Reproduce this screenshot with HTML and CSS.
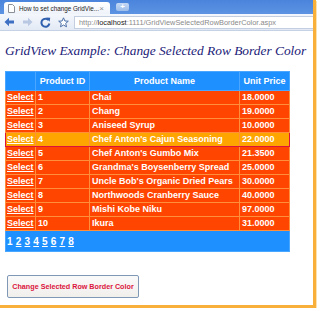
FILE: index.html
```html
<!DOCTYPE html>
<html lang="en">
<head>
  <meta charset="UTF-8">
  <title>GridView Selected Row Border Color</title>
  <link rel="stylesheet" href="styles.css">
</head>
<body>
  <div class="window">
    <div class="tabstrip">
      <div class="tab">
        <svg class="tab-icon" width="7" height="9" viewBox="0 0 7 9">
          <path d="M0.5 0.5 H4.5 L6.5 2.5 V8.5 H0.5 Z" fill="#fff" stroke="#8a8f98" stroke-width="1"/>
        </svg>
        <span class="tab-title">How to set change GridVie...</span>
        <span class="tab-close">×</span>
      </div>
      <div class="newtab">+</div>
    </div>

    <div class="toolbar">
      <svg class="tool" width="11" height="10" viewBox="0 0 11 10">
        <path d="M0.5 5 L5 0.8 V3.4 H10 V6.6 H5 V9.2 Z" fill="#3d6fc2"/>
      </svg>
      <svg class="tool" width="11" height="10" viewBox="0 0 11 10">
        <path d="M10.5 5 L6 0.8 V3.4 H1 V6.6 H6 V9.2 Z" fill="#b8c8e2"/>
      </svg>
      <svg class="tool" width="11" height="11" viewBox="0 0 11 11">
        <path d="M8.6 3.2 A4 4 0 1 0 9.4 6.5" fill="none" stroke="#2f5fae" stroke-width="2"/>
        <path d="M6.2 0.6 L10.2 0.8 L9.6 4.8 Z" fill="#2f5fae"/>
      </svg>
      <svg class="tool" width="11" height="11" viewBox="0 0 11 11">
        <path d="M5.5 0.8 L6.9 4 L10.3 4.2 L7.7 6.4 L8.5 9.8 L5.5 8 L2.5 9.8 L3.3 6.4 L0.7 4.2 L4.1 4 Z" fill="#fff" stroke="#4c6fa8" stroke-width="1"/>
      </svg>
      <div class="omnibox">
        <span class="url-dim">http://</span><span class="url-host">localhost</span><span class="url-dim">:1111/GridViewSelectedRowBorderColor.aspx</span>
      </div>
    </div>

    <div class="page">
      <h2 class="title">GridView Example: Change Selected Row Border Color</h2>

      <table class="grid">
        <thead>
          <tr>
            <th class="col-select"></th>
            <th class="col-id">Product ID</th>
            <th class="col-name">Product Name</th>
            <th class="col-price">Unit Price</th>
          </tr>
        </thead>
        <tbody>
          <tr><td><a href="#">Select</a></td><td>1</td><td>Chai</td><td>18.0000</td></tr>
          <tr><td><a href="#">Select</a></td><td>2</td><td>Chang</td><td>19.0000</td></tr>
          <tr><td><a href="#">Select</a></td><td>3</td><td>Aniseed Syrup</td><td>10.0000</td></tr>
          <tr class="selected"><td><a href="#">Select</a></td><td>4</td><td>Chef Anton's Cajun Seasoning</td><td>22.0000</td></tr>
          <tr><td><a href="#">Select</a></td><td>5</td><td>Chef Anton's Gumbo Mix</td><td>21.3500</td></tr>
          <tr><td><a href="#">Select</a></td><td>6</td><td>Grandma's Boysenberry Spread</td><td>25.0000</td></tr>
          <tr><td><a href="#">Select</a></td><td>7</td><td>Uncle Bob's Organic Dried Pears</td><td>30.0000</td></tr>
          <tr><td><a href="#">Select</a></td><td>8</td><td>Northwoods Cranberry Sauce</td><td>40.0000</td></tr>
          <tr><td><a href="#">Select</a></td><td>9</td><td>Mishi Kobe Niku</td><td>97.0000</td></tr>
          <tr><td><a href="#">Select</a></td><td>10</td><td>Ikura</td><td>31.0000</td></tr>
          <tr class="pager">
            <td colspan="4">
              <span>1</span>
              <a href="#">2</a>
              <a href="#">3</a>
              <a href="#">4</a>
              <a href="#">5</a>
              <a href="#">6</a>
              <a href="#">7</a>
              <a href="#">8</a>
            </td>
          </tr>
        </tbody>
      </table>

      <button class="btn" type="button">Change Selected Row Border Color</button>
    </div>
  </div>
</body>
</html>
```

FILE: styles.css
```css
body {
  margin: 0;
  padding: 0;
  background-color: #fff;
}

.window {
  width: 313px;
  height: 305px;
  background-color: #fff;
  border-right: 3px solid #f9b03a;
  border-bottom: 3px solid #f9b03a;
  box-shadow: 1px 1px 0 #fde2b0;
  overflow: hidden;
}

/* browser chrome */

.tabstrip {
  height: 14px;
  background: linear-gradient(#4a84dc, #5c93e2);
  display: flex;
  align-items: flex-end;
  padding-left: 4px;
  gap: 6px;
}

.tab {
  width: 106px;
  height: 12px;
  background: linear-gradient(#ffffff, #eef3fa);
  border-radius: 3px 3px 0 0;
  display: flex;
  align-items: center;
  padding: 0 4px;
  box-sizing: border-box;
  font-family: "Liberation Sans", Arial, sans-serif;
}

.tab-icon {
  margin-right: 4px;
  flex-shrink: 0;
}

.tab-title {
  font-size: 6.3px;
  color: #222;
  white-space: nowrap;
  flex: 1;
}

.tab-close {
  font-size: 8px;
  color: #8b8f96;
  margin-right: 2px;
}

.newtab {
  width: 13px;
  height: 8px;
  margin-bottom: 3px;
  background: linear-gradient(#c4d8f4, #9dbdea);
  border-radius: 2px;
  color: #fff;
  font-family: "Liberation Sans", Arial, sans-serif;
  font-size: 8px;
  font-weight: bold;
  line-height: 8px;
  text-align: center;
}

.toolbar {
  height: 17px;
  background: linear-gradient(#f4f7fc, #e3eaf5);
  border-bottom: 1px solid #c5d2e6;
  box-sizing: border-box;
  display: flex;
  align-items: center;
  padding-left: 4px;
  gap: 7px;
}

.tool {
  flex-shrink: 0;
}

.omnibox {
  flex: 1;
  height: 13px;
  margin-left: -2px;
  background-color: #fff;
  border: 1px solid #c3cfe0;
  border-right: none;
  box-sizing: border-box;
  padding-left: 4px;
  font-family: "Liberation Sans", Arial, sans-serif;
  font-size: 7.4px;
  line-height: 11px;
  white-space: nowrap;
  overflow: hidden;
}

.url-dim {
  color: #8a8a8a;
}

.url-host {
  color: #222;
}

/* page content */

.page {
  padding: 0 5px;
}

.title {
  margin: 12px 0 12px 0;
  font-family: "Liberation Serif", "Times New Roman", serif;
  font-style: italic;
  font-weight: normal;
  font-size: 13.4px;
  line-height: 16px;
  color: #1a1a78;
  white-space: nowrap;
}

.grid {
  border-collapse: collapse;
  width: 284px;
  table-layout: fixed;
  font-family: "Comic Sans MS", "Liberation Sans", Arial, sans-serif;
  font-weight: bold;
  font-size: 9px;
  color: #fff;
}

.grid th {
  height: 18px;
  padding: 0;
  background-color: #1e90ff;
  border: 1px solid #4aa6ff;
  text-align: center;
  white-space: nowrap;
}

.col-select { width: 29px; }
.col-id { width: 53px; }
.col-name { width: 149px; }
.col-price { width: 49px; }

.grid td {
  height: 13px;
  padding: 0 0 0 2px;
  background-color: #ff4500;
  border: 1px solid #ff8f3a;
  white-space: nowrap;
  overflow: hidden;
  line-height: 13px;
}

.grid td:first-child {
  padding-left: 1px;
}

.grid a {
  color: #fff;
}

.grid tr.selected td {
  background-color: #ffa500;
  border-top-color: #dc143c;
  border-bottom-color: #dc143c;
}

.grid tr.selected td:first-child {
  border-left-color: #dc143c;
}

.grid tr.selected td:last-child {
  border-right-color: #dc143c;
}

.grid tr.pager td {
  height: 20px;
  background-color: #1e90ff;
  border-color: #4aa6ff;
  font-size: 10px;
  letter-spacing: 0.2px;
  padding-left: 1px;
}

.btn {
  display: block;
  margin: 23px 0 0 2px;
  width: 132px;
  height: 23px;
  padding: 0;
  background: linear-gradient(#fbfafa, #f1efec);
  border: 1px solid #7f98b6;
  border-radius: 2px;
  font-family: "Comic Sans MS", "Liberation Sans", Arial, sans-serif;
  font-weight: bold;
  font-size: 7.2px;
  color: #dc143c;
  white-space: nowrap;
}
```
